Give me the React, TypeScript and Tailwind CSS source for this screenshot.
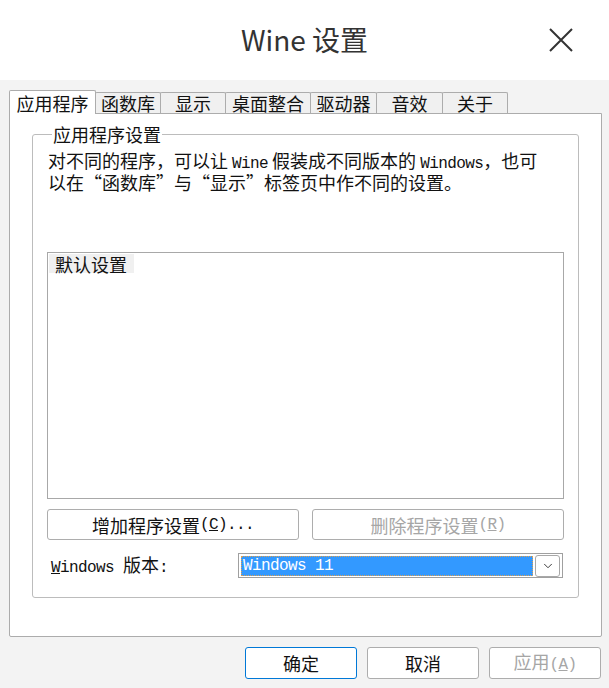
import { ChevronDown } from "lucide-react";

const cjk = "font-['Noto_Sans_CJK_SC',sans-serif]";
const mono = "font-['Liberation_Mono','Noto_Sans_CJK_SC',monospace] text-[16px] tracking-[-0.6px]";

function Latin({ children }: { children: React.ReactNode }) {
  return <span className={mono}>{children}</span>;
}

export default function App() {
  const tabs = [
    { label: "函数库", w: "w-[66px]" },
    { label: "显示", w: "w-[66px]" },
    { label: "桌面整合", w: "w-[86px]" },
    { label: "驱动器", w: "w-[67px]" },
    { label: "音效", w: "w-[67px]" },
    { label: "关于", w: "w-[66px]" },
  ];

  return (
    <div lang="zh-CN" className={`w-[609px] h-[688px] bg-[#f3f3f3] flex flex-col text-[18px] leading-[18px] text-[#111] ${cjk}`}>
      {/* title bar */}
      <div className="h-[80px] bg-white grid grid-cols-[1fr_auto_1fr] items-center">
        <div />
        <div className="text-[28px] leading-[32px] text-[#333] pb-[2px]">Wine 设置</div>
        <div className="flex justify-end pr-[36px]">
          <svg width="24" height="24" viewBox="0 0 24 24" className="text-[#333]">
            <path d="M1 1 L23 23 M23 1 L1 23" stroke="currentColor" strokeWidth="2" fill="none" />
          </svg>
        </div>
      </div>

      <div className="flex-1 pl-[9px] pr-[7px] pt-[10px]">
        {/* tab strip */}
        <div className="flex items-end h-[23px]">
          <div className="relative z-10 w-[87px] h-[24px] -mb-px bg-white border-x border-t border-[#acacac] rounded-t-[2px] flex items-center justify-center">
            应用程序
          </div>
          {tabs.map((t) => (
            <div
              key={t.label}
              className={`${t.w} h-[21px] -ml-px bg-[#f0f0f0] border-x border-t border-[#acacac] rounded-t-[2px] flex items-center justify-center first:ml-0`}
            >
              {t.label}
            </div>
          ))}
        </div>

        {/* tab panel */}
        <div className="h-[524px] bg-white border border-[#acacac] rounded-b-[2px] px-[22px] pt-[11px]">
          <fieldset className="h-[473px] border border-[#bcbcbc] rounded-[3px] px-[14px]">
            <legend className="ml-[5px] px-[1px] leading-[18px]">应用程序设置</legend>
            <div className="mt-[8px] pl-[1px] leading-[18px] whitespace-nowrap">
              <div>
                对不同的程序，可以让 <Latin>Wine</Latin> 假装成不同版本的 <Latin>Windows</Latin>，也可
              </div>
              <div>以在“函数库”与“显示”标签页中作不同的设置。</div>
            </div>

            <div className="mt-[61px] h-[247px] border border-[#a8a8a8] p-px">
              <div className="w-[85px] h-[19px] bg-[#f0f0f0] pl-[6px] flex items-center">默认设置</div>
            </div>

            <div className="mt-[10px] grid grid-cols-2 gap-[13px]">
              <button className="h-[31px] bg-white border border-[#adadad] rounded-[3px] flex items-center justify-center">
                增加程序设置<Latin>(<u>C</u>)...</Latin>
              </button>
              <button className="h-[31px] bg-white border border-[#adadad] rounded-[3px] flex items-center justify-center text-[#a6a6a6]">
                删除程序设置<Latin>(<u>R</u>)</Latin>
              </button>
            </div>

            <div className="mt-[13px] flex items-center">
              <div className="pl-[4px] whitespace-nowrap">
                <Latin>
                  <u>W</u>indows{" "}
                </Latin>
                版本<Latin>:</Latin>
              </div>
              <div className="ml-auto mr-[1px] w-[325px] h-[25px] bg-white border border-[#a0a0a0] flex items-center p-[2px] gap-[2px]">
                <div className="flex-1 h-[20px] bg-[#3399ff] border border-dotted border-[#e0a050] text-white flex items-center pl-[1px]">
                  <Latin>Windows 11</Latin>
                </div>
                <div className="w-[25px] h-[22px] bg-white border border-[#a8a8a8] rounded-[3px] flex items-center justify-center">
                  <ChevronDown className="w-[14px] h-[14px] text-[#222]" strokeWidth={1.5} />
                </div>
              </div>
            </div>
          </fieldset>
        </div>

        {/* dialog buttons */}
        <div className="mt-[10px] mr-[1px] flex justify-end gap-[10px]">
          <button className="w-[112px] h-[32px] bg-white border border-[#0078d7] rounded-[3px]">确定</button>
          <button className="w-[112px] h-[32px] bg-white border border-[#adadad] rounded-[3px]">取消</button>
          <button className="w-[112px] h-[32px] bg-white border border-[#adadad] rounded-[3px] text-[#a6a6a6]">
            应用<Latin>(<u>A</u>)</Latin>
          </button>
        </div>
      </div>
    </div>
  );
}
